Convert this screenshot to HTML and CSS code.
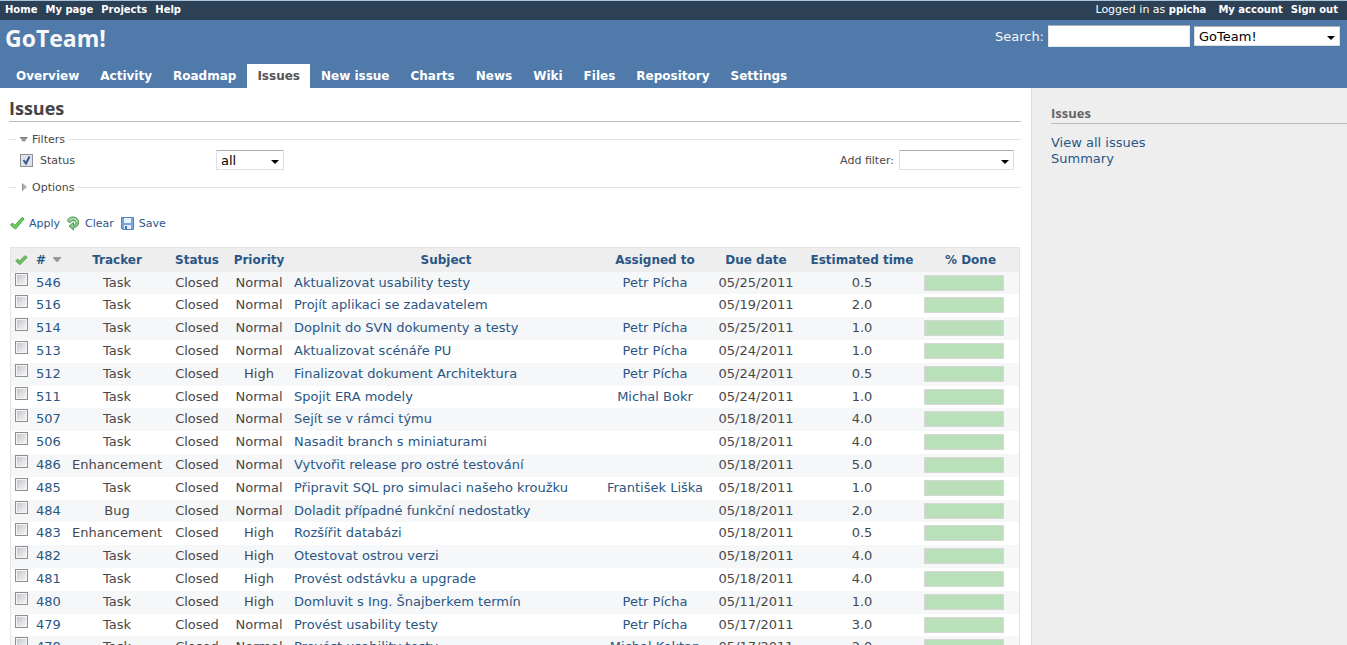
FILE: index.html
```html
<!DOCTYPE html>
<html lang="en">
<head>
<meta charset="utf-8">
<title>Issues - GoTeam!</title>
<link rel="stylesheet" href="styles.css">
</head>
<body>
<nav class="top-menu">
  <div class="top-links"><a href="#">Home</a><a href="#">My page</a><a href="#">Projects</a><a href="#">Help</a></div>
  <div class="top-links account"><span class="logged">Logged in as <a href="#">ppicha</a></span><a href="#">My account</a><a href="#">Sign out</a></div>
</nav>
<header class="header">
  <div class="header-row">
    <h1>GoTeam!</h1>
    <form class="quick-search">
      <label for="q">Search:</label>
      <input id="q" type="text">
      <select class="select project" aria-label="Project"><option>GoTeam!</option></select>
    </form>
  </div>
  <nav class="main-menu">
    <a href="#">Overview</a><a href="#">Activity</a><a href="#">Roadmap</a><a href="#" class="selected">Issues</a><a href="#">New issue</a><a href="#">Charts</a><a href="#">News</a><a href="#">Wiki</a><a href="#">Files</a><a href="#">Repository</a><a href="#">Settings</a>
  </nav>
</header>
<div class="main">
  <main class="content">
    <h2>Issues</h2>
    <form>
      <fieldset class="filters">
        <legend><svg width="12" height="12" viewBox="0 0 12 12"><path d="M2 4.500h7.500L7 8.500H4.500z" fill="#999"/><path d="M2 4.500h7.500" stroke="#777"/></svg>Filters</legend>
        <div class="filter-row">
          <input class="check" type="checkbox" id="status" checked>
          <label for="status" class="status-label">Status</label>
          <select class="select operator" aria-label="Status operator"><option>all</option></select>
          <label for="add" class="add-label">Add filter:</label>
          <select class="select add" id="add"><option></option></select>
        </div>
      </fieldset>
      <fieldset class="options">
        <legend><svg width="12" height="12" viewBox="0 0 12 12"><path d="M4.500 2.500v7L8.500 7V5z" fill="#b5b5b5"/><path d="M4.500 2.500v7" stroke="#888"/></svg>Options</legend>
      </fieldset>
      <div class="buttons">
        <a href="#"><svg width="16" height="16" viewBox="0 0 16 16"><path d="M1.500 10l2-2 2.500 2.500 7-8 2 1.500L6.500 14z" fill="#6fd25c" stroke="#3f9a37"/></svg>Apply</a>
        <a href="#"><svg width="16" height="16" viewBox="0 0 16 16"><path d="M2.500 5.500C4 .5 13.500.5 13.500 7.500c0 3.500-2.500 5-5 5v2.500L4 11l4.500-3.500V10c3.500 0 3-4.500-.500-4.500-2 0-1.500 2-3 2s-2-1-2.500-2z" fill="#8fcb8d" stroke="#4a9350"/><path d="M4.500 5c2-2.500 7-2 7.500 2" fill="none" stroke="#c0e5bd"/></svg>Clear</a>
        <a href="#"><svg width="16" height="16" viewBox="0 0 16 16"><path d="M2.500 2.500h12v12h-11l-1-1z" fill="#77a5dd" stroke="#5584c2"/><path d="M5 3h7v5H5z" fill="#eaf3fc"/><path d="M5 10h7v4H5z" fill="#e3ebf5"/><path d="M6 11h2v3H6z" fill="#3e6ca8"/></svg>Save</a>
      </div>
    </form>
    <table class="issues">
      <colgroup><col class="c-check"><col class="c-id"><col class="c-tracker"><col class="c-status"><col class="c-priority"><col><col class="c-assigned"><col class="c-due"><col class="c-hours"><col class="c-done"></colgroup>
      <thead><tr>
        <th><a href="#" aria-label="Check all"><svg width="14" height="14" viewBox="0 0 16 16"><path d="M2 9l2-2 2.500 2 6-6 2.500 2-8.500 8.500z" fill="#6cc263" stroke="#4a9a45"/></svg></a></th>
        <th class="id"><a href="#">#<svg class="sort" width="10" height="8" viewBox="0 0 10 8"><path d="M1 0h8v1L5.500 5h-1L1 1z" fill="#999"/></svg></a></th>
        <th><a href="#">Tracker</a></th><th><a href="#">Status</a></th><th><a href="#">Priority</a></th><th><a href="#">Subject</a></th><th><a href="#">Assigned to</a></th><th><a href="#">Due date</a></th><th><a href="#">Estimated time</a></th><th><a href="#">% Done</a></th>
      </tr></thead>
      <tbody>
<tr><td><input class="check" type="checkbox" aria-label="546"></td><td class="id"><a href="#">546</a></td><td>Task</td><td>Closed</td><td>Normal</td><td class="subject"><a href="#">Aktualizovat usability testy</a></td><td><a href="#">Petr Pícha</a></td><td>05/25/2011</td><td>0.5</td><td><div class="bar"></div></td></tr>
<tr><td><input class="check" type="checkbox" aria-label="516"></td><td class="id"><a href="#">516</a></td><td>Task</td><td>Closed</td><td>Normal</td><td class="subject"><a href="#">Projít aplikaci se zadavatelem</a></td><td></td><td>05/19/2011</td><td>2.0</td><td><div class="bar"></div></td></tr>
<tr><td><input class="check" type="checkbox" aria-label="514"></td><td class="id"><a href="#">514</a></td><td>Task</td><td>Closed</td><td>Normal</td><td class="subject"><a href="#">Doplnit do SVN dokumenty a testy</a></td><td><a href="#">Petr Pícha</a></td><td>05/25/2011</td><td>1.0</td><td><div class="bar"></div></td></tr>
<tr><td><input class="check" type="checkbox" aria-label="513"></td><td class="id"><a href="#">513</a></td><td>Task</td><td>Closed</td><td>Normal</td><td class="subject"><a href="#">Aktualizovat scénáře PU</a></td><td><a href="#">Petr Pícha</a></td><td>05/24/2011</td><td>1.0</td><td><div class="bar"></div></td></tr>
<tr><td><input class="check" type="checkbox" aria-label="512"></td><td class="id"><a href="#">512</a></td><td>Task</td><td>Closed</td><td>High</td><td class="subject"><a href="#">Finalizovat dokument Architektura</a></td><td><a href="#">Petr Pícha</a></td><td>05/24/2011</td><td>0.5</td><td><div class="bar"></div></td></tr>
<tr><td><input class="check" type="checkbox" aria-label="511"></td><td class="id"><a href="#">511</a></td><td>Task</td><td>Closed</td><td>Normal</td><td class="subject"><a href="#">Spojit ERA modely</a></td><td><a href="#">Michal Bokr</a></td><td>05/24/2011</td><td>1.0</td><td><div class="bar"></div></td></tr>
<tr><td><input class="check" type="checkbox" aria-label="507"></td><td class="id"><a href="#">507</a></td><td>Task</td><td>Closed</td><td>Normal</td><td class="subject"><a href="#">Sejít se v rámci týmu</a></td><td></td><td>05/18/2011</td><td>4.0</td><td><div class="bar"></div></td></tr>
<tr><td><input class="check" type="checkbox" aria-label="506"></td><td class="id"><a href="#">506</a></td><td>Task</td><td>Closed</td><td>Normal</td><td class="subject"><a href="#">Nasadit branch s miniaturami</a></td><td></td><td>05/18/2011</td><td>4.0</td><td><div class="bar"></div></td></tr>
<tr><td><input class="check" type="checkbox" aria-label="486"></td><td class="id"><a href="#">486</a></td><td>Enhancement</td><td>Closed</td><td>Normal</td><td class="subject"><a href="#">Vytvořit release pro ostré testování</a></td><td></td><td>05/18/2011</td><td>5.0</td><td><div class="bar"></div></td></tr>
<tr><td><input class="check" type="checkbox" aria-label="485"></td><td class="id"><a href="#">485</a></td><td>Task</td><td>Closed</td><td>Normal</td><td class="subject"><a href="#">Připravit SQL pro simulaci našeho kroužku</a></td><td><a href="#">František Liška</a></td><td>05/18/2011</td><td>1.0</td><td><div class="bar"></div></td></tr>
<tr><td><input class="check" type="checkbox" aria-label="484"></td><td class="id"><a href="#">484</a></td><td>Bug</td><td>Closed</td><td>Normal</td><td class="subject"><a href="#">Doladit případné funkční nedostatky</a></td><td></td><td>05/18/2011</td><td>2.0</td><td><div class="bar"></div></td></tr>
<tr><td><input class="check" type="checkbox" aria-label="483"></td><td class="id"><a href="#">483</a></td><td>Enhancement</td><td>Closed</td><td>High</td><td class="subject"><a href="#">Rozšířit databázi</a></td><td></td><td>05/18/2011</td><td>0.5</td><td><div class="bar"></div></td></tr>
<tr><td><input class="check" type="checkbox" aria-label="482"></td><td class="id"><a href="#">482</a></td><td>Task</td><td>Closed</td><td>High</td><td class="subject"><a href="#">Otestovat ostrou verzi</a></td><td></td><td>05/18/2011</td><td>4.0</td><td><div class="bar"></div></td></tr>
<tr><td><input class="check" type="checkbox" aria-label="481"></td><td class="id"><a href="#">481</a></td><td>Task</td><td>Closed</td><td>High</td><td class="subject"><a href="#">Provést odstávku a upgrade</a></td><td></td><td>05/18/2011</td><td>4.0</td><td><div class="bar"></div></td></tr>
<tr><td><input class="check" type="checkbox" aria-label="480"></td><td class="id"><a href="#">480</a></td><td>Task</td><td>Closed</td><td>High</td><td class="subject"><a href="#">Domluvit s Ing. Šnajberkem termín</a></td><td><a href="#">Petr Pícha</a></td><td>05/11/2011</td><td>1.0</td><td><div class="bar"></div></td></tr>
<tr><td><input class="check" type="checkbox" aria-label="479"></td><td class="id"><a href="#">479</a></td><td>Task</td><td>Closed</td><td>Normal</td><td class="subject"><a href="#">Provést usability testy</a></td><td><a href="#">Petr Pícha</a></td><td>05/17/2011</td><td>3.0</td><td><div class="bar"></div></td></tr>
<tr><td><input class="check" type="checkbox" aria-label="478"></td><td class="id"><a href="#">478</a></td><td>Task</td><td>Closed</td><td>Normal</td><td class="subject"><a href="#">Provést usability testy</a></td><td><a href="#">Michal Koktan</a></td><td>05/17/2011</td><td>2.0</td><td><div class="bar"></div></td></tr>
      </tbody>
    </table>
  </main>
  <aside class="sidebar">
    <h3>Issues</h3>
    <a href="#">View all issues</a>
    <a href="#">Summary</a>
  </aside>
</div>
</body>
</html>
```
FILE: styles.css
```css
* { box-sizing: border-box; }
body {
  margin: 0;
  height: 100vh;
  overflow: hidden;
  display: flex;
  flex-direction: column;
  font-family: Verdana, "DejaVu Sans", sans-serif;
  font-size: 13px;
  color: #484848;
  background: #fff;
}
a { color: #2a5685; text-decoration: none; }
h1, h2, h3 { margin: 0; font-family: "Trebuchet MS", "Open Sans", sans-serif; }

.top-menu {
  flex: none;
  display: flex;
  justify-content: space-between;
  height: 20px;
  padding: 0 9px 0 5px;
  border-top: 1px solid #a9c3db;
  background: #2c4056;
  color: #fff;
  font-size: 10px;
  line-height: 18px;
}
.top-links { display: flex; gap: 8px; }
.top-links a { color: #fff; font-size: 10px; font-weight: bold; }
.logged { margin-right: 4px; font-size: 11px; }

.header {
  flex: none;
  display: flex;
  flex-direction: column;
  justify-content: space-between;
  height: 68px;
  background: #507aaa;
  color: #f8f8f8;
}
.header-row { display: flex; justify-content: space-between; padding: 4px 7px 0 5px; }
.header h1 { font-size: 23px; line-height: 28px; }
.quick-search { display: flex; align-items: center; gap: 4px; height: 24px; }
.quick-search input {
  width: 142px;
  height: 22px;
  border: 1px solid #e3e9ef;
  border-top-color: #abadb3;
  border-radius: 1px;
  background: #fff;
}
.select {
  appearance: none;
  height: 20px;
  margin: 0;
  padding: 0 4px;
  border: 1px solid #dcdfe6;
  border-top-color: #abadb3;
  border-radius: 1px;
  background: #fff url("data:image/svg+xml,%3Csvg xmlns='http://www.w3.org/2000/svg' width='8' height='4'%3E%3Cpath d='M0 0h8L4 4z'/%3E%3C/svg%3E") no-repeat right 4px top 9px;
  color: #000;
  font-family: inherit;
  font-size: 13px;
}
.project { width: 146px; }

.main-menu { display: flex; gap: 1px; padding-left: 6px; }
.main-menu a {
  padding: 0 10px;
  color: #fff;
  font-size: 12px;
  font-weight: bold;
  line-height: 24px;
}
.main-menu .selected { background: #fff; color: #555; }

.main { flex: 1; min-height: 0; display: flex; }
.content { flex: 1; min-width: 0; padding: 8px 10px 0 9px; }
.content h2 {
  height: 26px;
  border-bottom: 1px solid #bbb;
  color: #444;
  font-size: 18px;
  line-height: 24px;
}

fieldset { margin: 0; padding: 0; border: 0; border-top: 1px solid #e4e4e4; font-size: 11px; }
legend { display: flex; align-items: center; height: 14px; margin-left: 7px; padding: 0 3px 0 2px; }
legend svg { margin-right: 2px; }
.filters { height: 48px; margin-top: 10px; }
.filter-row { display: flex; align-items: center; height: 28px; padding: 0 7px 0 11px; }
.status-label { width: 176px; margin-left: 7px; }
.operator { width: 68px; }
.add-label { margin-left: auto; margin-right: 5px; }
.add { width: 115px; }
.buttons { display: flex; gap: 5px; height: 18px; margin: 20px 0 15px; font-size: 11px; }
.buttons a { display: flex; align-items: center; gap: 4px; }

.check {
  appearance: none;
  flex: none;
  width: 13px;
  height: 13px;
  margin: 0;
  border: 1px solid #8e8f8f;
  background: linear-gradient(135deg, #c3c7ce, #f5f5f5) center / 9px 9px no-repeat #f4f4f4;
}
.check:checked {
  background: url("data:image/svg+xml,%3Csvg xmlns='http://www.w3.org/2000/svg' width='11' height='11'%3E%3Cpath d='M2.500 5l2.500 3.500L8.500 1.500' fill='none' stroke='%233c5793' stroke-width='2'/%3E%3C/svg%3E") center no-repeat #e0e4ea;
}

.issues {
  width: calc(100% - 2px);
  margin-left: 1px;
  table-layout: fixed;
  border: 1px solid #e4e4e4;
  border-collapse: separate;
  border-spacing: 0;
  text-align: center;
}
.c-check { width: 20px; }
.c-id { width: 35px; }
.c-tracker { width: 102px; }
.c-status { width: 58px; }
.c-priority { width: 66px; }
.c-assigned { width: 110px; }
.c-due { width: 92px; }
.c-hours { width: 120px; }
.c-done { width: 97px; }
.issues th, .issues td { padding: 0; white-space: nowrap; }
.issues th { height: 24px; background: #eee; font-size: 12px; }
.issues th svg { vertical-align: middle; }
.issues .sort { margin-left: 6px; }
.issues td { height: 23px; line-height: 22px; vertical-align: top; }
.issues tr:nth-child(5n+1) td { height: 22px; }
.issues tbody tr:nth-child(odd) { background: #f6f7f8; }
.issues .id { padding-left: 5px; text-align: left; }
.issues td.subject { padding-left: 2px; text-align: left; }
.issues .check { display: block; margin: 1px 0 0 4px; }
.bar { width: 80px; height: 16px; margin: 3px 0 0 2px; border: 1px solid #d7d7d7; background: #bae0ba; }

.sidebar {
  width: 316px;
  padding: 16px 0 0 19px;
  border-left: 1px solid #ddd;
  background: #eee;
}
.sidebar h3 {
  height: 20px;
  margin-bottom: 11px;
  border-bottom: 1px solid #bbb;
  color: #666;
  font-size: 13px;
  line-height: 18px;
}
.sidebar a { display: block; line-height: 16px; }
```
